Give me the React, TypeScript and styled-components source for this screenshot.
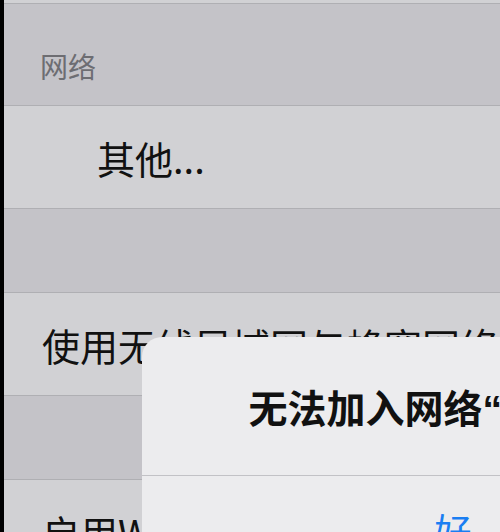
import React from 'react';
import styled, { createGlobalStyle } from 'styled-components';

const GlobalStyle = createGlobalStyle`
  html, body {
    margin: 0;
    padding: 0;
    background: #000;
    overflow: hidden;
  }
  body {
    font-family: "Noto Sans CJK SC", "Noto Sans", sans-serif;
  }
`;

const Screen = styled.div`
  position: relative;
  width: 500px;
  height: 532px;
  overflow: hidden;
  padding-left: 4px;
  box-sizing: border-box;
  background: #000;
`;

const List = styled.div`
  display: flex;
  flex-direction: column;
  background: #c4c3c8;
  height: 100%;
`;

const Cell = styled.div<{ $h: number; $indent: number }>`
  flex: none;
  height: ${p => p.$h}px;
  display: flex;
  align-items: center;
  padding-left: ${p => p.$indent}px;
  background: #d1d1d4;
  border-bottom: 1px solid #afafb3;
  font-size: 38px;
  color: #111;
  white-space: nowrap;
`;

const SectionHeader = styled.div`
  flex: none;
  height: 102px;
  padding: 42px 0 0 36px;
  box-sizing: border-box;
  border-bottom: 1px solid #afafb3;
  font-size: 28px;
  line-height: 40px;
  color: #6d6d72;
`;

const Gap = styled.div`
  flex: none;
  height: 83px;
  border-bottom: 1px solid #afafb3;
`;

const Alert = styled.div`
  position: absolute;
  left: 142px;
  top: 337px;
  width: 622px;
  background: #ececee;
  border-radius: 20px;
  overflow: hidden;
`;

const AlertTitle = styled.div`
  height: 138px;
  display: flex;
  align-items: center;
  justify-content: center;
  padding-right: 8px;
  font-family: "Liberation Sans", "Noto Sans CJK SC", sans-serif;
  font-size: 39px;
  font-weight: 700;
  color: #111;
  white-space: nowrap;
  border-bottom: 1px solid #c2c2c6;
`;

const AlertButton = styled.div`
  height: 90px;
  display: flex;
  align-items: center;
  justify-content: center;
  font-size: 37px;
  color: #1a7ef2;
  padding-top: 18px;
  box-sizing: border-box;
`;

const App: React.FC = () => {
  return (
    <>
      <GlobalStyle />
      <Screen>
        <List>
          <Cell $h={3} $indent={0} />
          <SectionHeader>网络</SectionHeader>
          <Cell $h={102} $indent={93}>其他...</Cell>
          <Gap />
          <Cell $h={102} $indent={38}>使用无线局域网与蜂窝网络的App</Cell>
          <Gap />
          <Cell $h={102} $indent={38}>启用WLAN助理</Cell>
        </List>
        <Alert>
          <AlertTitle>无法加入网络“Xiaomi”</AlertTitle>
          <AlertButton>好</AlertButton>
        </Alert>
      </Screen>
    </>
  );
};

export default App;
